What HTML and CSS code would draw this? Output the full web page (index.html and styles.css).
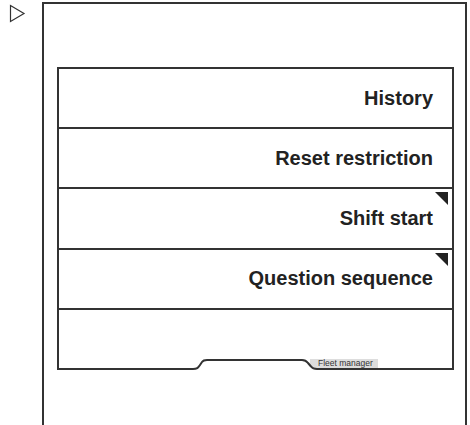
FILE: index.html
```html
<!DOCTYPE html>
<html lang="en">
<head>
  <meta charset="UTF-8" />
  <title>Fleet manager menu</title>
  <link rel="stylesheet" href="styles.css">
</head>
<body>
  <div class="screen">
    <svg class="play-icon" width="17" height="19" viewBox="0 0 17 19" aria-hidden="true">
      <path d="M1.5 1.5 L15 9.5 L1.5 17.5 Z" fill="none" stroke="#333" stroke-width="1.2"/>
    </svg>

    <div class="frame">
      <div class="menu">
        <div class="menu-item">History</div>
        <div class="menu-item">Reset restriction</div>
        <div class="menu-item has-sub">Shift start</div>
        <div class="menu-item has-sub">Question sequence</div>
        <div class="menu-item"></div>

        <span class="tab-label">Fleet manager</span>
        <!-- tab notch over the bottom edge -->
        <svg class="notch" width="140" height="14" viewBox="0 0 140 14" aria-hidden="true">
          <path d="M0 12 L8 12 C12 12 13 11 15 8 L17 5 C18 3.5 19.5 3 22 3 L117 3 C120 3 121.5 4 123 6 L126 9.5 C127.5 11.5 129 12 132 12 L140 12 L140 14 L0 14 Z" fill="#fff" stroke="none"/>
          <path d="M0 12 L8 12 C12 12 13 11 15 8 L17 5 C18 3.5 19.5 3 22 3 L117 3 C120 3 121.5 4 123 6 L126 9.5 C127.5 11.5 129 12 132 12 L140 12" fill="none" stroke="#333" stroke-width="2"/>
        </svg>
      </div>
    </div>
  </div>
</body>
</html>
```

FILE: styles.css
```css
html, body {
  margin: 0;
  padding: 0;
  background: #fff;
  overflow: hidden;
}
.screen {
  position: relative;
  height: 425px;
  padding: 2px 3px 0 42px;
  box-sizing: border-box;
}
.play-icon {
  position: absolute;
  left: 9px;
  top: 4px;
}
.frame {
  border: 2px solid #333;
  border-bottom: none;
  height: 440px;
  padding: 63px 11px 0 13px;
  box-sizing: border-box;
}
.menu {
  position: relative;
  border: 2px solid #333;
}
.menu-item {
  position: relative;
  height: 58.2px;
  border-bottom: 2px solid #333;
  display: flex;
  align-items: center;
  justify-content: flex-end;
  padding-right: 19px;
  font-family: "Liberation Sans", Arial, sans-serif;
  font-weight: 700;
  font-size: 20px;
  color: #222;
}
.menu-item:nth-child(5) {
  border-bottom: none;
}
.menu-item.has-sub::after {
  content: "";
  position: absolute;
  top: 3px;
  right: 4px;
  border-style: solid;
  border-width: 0 13px 13px 0;
  border-color: transparent #222 transparent transparent;
}
.notch {
  position: absolute;
  left: 126px;
  bottom: -3px;
}
.tab-label {
  position: absolute;
  left: 251px;
  bottom: 0;
  background: #ddd;
  font-family: "Liberation Sans", Arial, sans-serif;
  font-size: 8.5px;
  line-height: 9px;
  padding: 0 5px 0 8px;
  color: #333;
}
```
